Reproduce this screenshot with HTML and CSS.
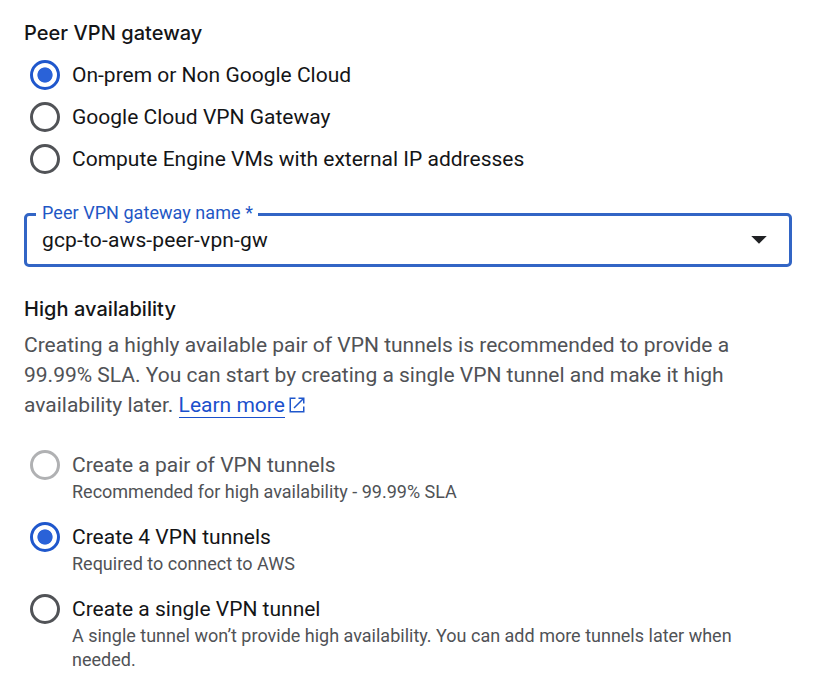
FILE: index.html
```html
<!DOCTYPE html>
<html lang="en">
<head>
<meta charset="utf-8">
<title>VPN tunnels</title>
<link rel="stylesheet" href="styles.css">
</head>
<body>
<main class="form">
  <h2 class="heading">Peer VPN gateway</h2>
  <div class="options">
    <label class="option"><span class="radio checked"></span><span class="label">On-prem or Non Google Cloud</span></label>
    <label class="option"><span class="radio"></span><span class="label">Google Cloud VPN Gateway</span></label>
    <label class="option"><span class="radio"></span><span class="label">Compute Engine VMs with external IP addresses</span></label>
  </div>
  <div class="select">
    <span class="select-label">Peer VPN gateway name *</span>
    <span class="select-value">gcp-to-aws-peer-vpn-gw</span>
    <svg class="arrow" width="16" height="8" viewBox="0 0 16 8"><path d="M.25 0h15.500L8 7.800z" fill="#202124"/></svg>
  </div>
  <h2 class="heading ha">High availability</h2>
  <p class="description">Creating a highly available pair of VPN tunnels is recommended to provide a<br>99.99% SLA. You can start by creating a single VPN tunnel and make it high<br>availability later. <a class="link" href="#">Learn more</a><svg class="external" width="16" height="16" viewBox="0 0 16 16" fill="none" stroke="#1f57cc" stroke-width="1.500"><path d="M6.500 1.250H1.250v13.500h13.500V9.500M9.500 1.250h5.250V6.500M14.500 1.500 5 11"/></svg></p>
  <div class="choices">
    <label class="choice disabled"><span class="radio"></span><span class="choice-text"><span class="label">Create a pair of VPN tunnels</span><span class="hint">Recommended for high availability - 99.99% SLA</span></span></label>
    <label class="choice"><span class="radio checked"></span><span class="choice-text"><span class="label">Create 4 VPN tunnels</span><span class="hint">Required to connect to AWS</span></span></label>
    <label class="choice"><span class="radio"></span><span class="choice-text"><span class="label">Create a single VPN tunnel</span><span class="hint">A single tunnel won’t provide high availability. You can add more tunnels later when<br>needed.</span></span></label>
  </div>
</main>
</body>
</html>
```
FILE: styles.css
```css
* { box-sizing: border-box; }
body { margin: 0; background: #fff; color: #141517; font-family: Roboto, sans-serif; }
.form { width: 830px; height: 699px; padding: 18px 38px 0 24px; overflow: hidden; }
.heading { margin: 0; height: 30px; font: 500 20px/30px Inter, sans-serif; letter-spacing: .05px; }
.options { display: flex; flex-direction: column; margin-top: 6px; }
.option { display: flex; height: 42px; align-items: center; }
.radio { flex: none; display: grid; place-items: center; width: 30px; height: 30px; margin: 0 12px 0 6px; border: 3px solid #515357; border-radius: 50%; }
.radio.checked { border-color: #1f57cc; }
.radio.checked::after { content: ""; width: 16px; height: 16px; background: radial-gradient(circle, #2a62d8 7.2px, transparent 8px); }
.label { font-size: 21px; line-height: 30px; white-space: nowrap; }
.select { position: relative; display: flex; align-items: center; justify-content: space-between; height: 54px; margin-top: 33px; padding: 0 22px 0 15px; border: 3px solid #3265c5; border-radius: 5px; }
.select-label { position: absolute; left: 9px; top: -14px; padding: 0 5px 0 6px; background: #fff; color: #1f57c5; font-size: 18px; line-height: 22px; letter-spacing: .05px; white-space: nowrap; }
.select-value { font-size: 21px; letter-spacing: .15px; }
.ha { margin-top: 27px; }
.description { margin: 6px 0 0; color: #505256; font-size: 21px; line-height: 30px; white-space: nowrap; }
.link { color: #1a50cc; text-decoration: none; border-bottom: 1px solid #1a50cc; }
.external { margin-left: 4px; vertical-align: -1px; }
.choices { margin-top: 30px; display: flex; flex-direction: column; }
.choice { display: flex; min-height: 72px; align-items: flex-start; }
.choice-text { display: flex; flex-direction: column; }
.hint { color: #505256; font-size: 18px; line-height: 24px; white-space: nowrap; }
.disabled .radio { border-color: #b0b1b3; }
.disabled .label { color: #505256; }
```
